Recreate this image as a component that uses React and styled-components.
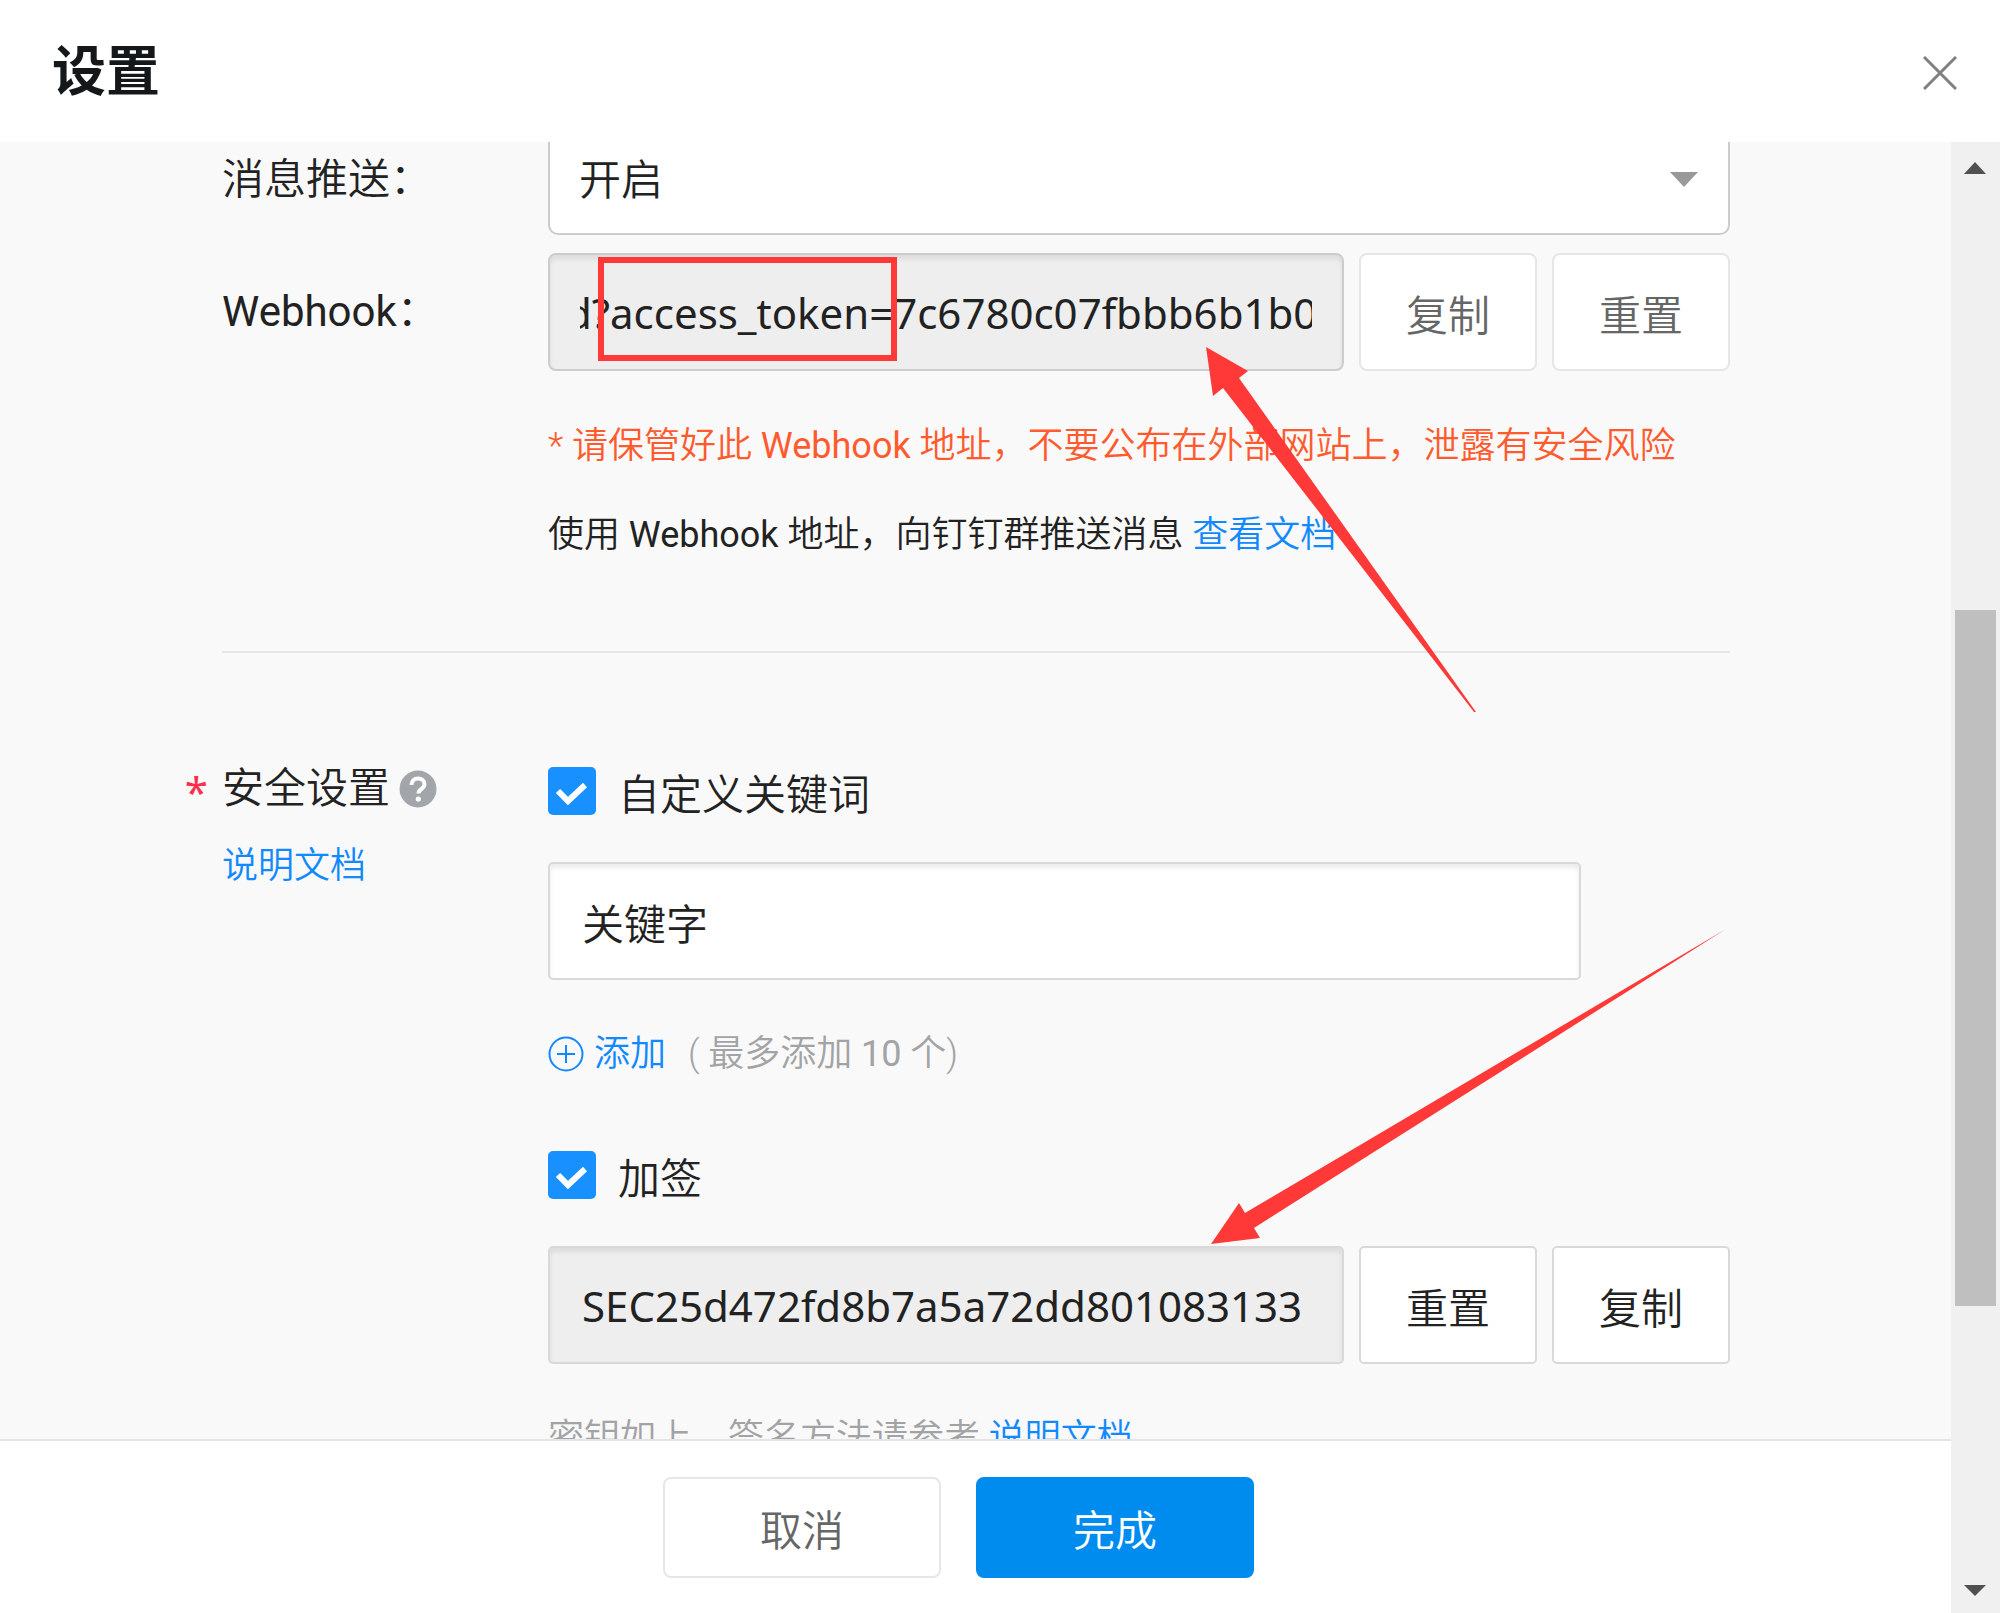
import React, { useEffect, useRef, useState } from 'react';
import styled, { createGlobalStyle } from 'styled-components';

const GlobalStyle = createGlobalStyle`
  * {
    box-sizing: border-box;
  }
  body {
    margin: 0;
    background: #fff;
    color: #222;
    font-family: Roboto, 'Noto Sans CJK SC', sans-serif;
    font-size: 42px;
    font-weight: 350;
  }
  button, input, select {
    font: inherit;
    color: inherit;
  }
`;

const App = () => {
  const tokenInput = useRef(null);
  const [keyword, setKeyword] = useState('关键字');
  const [useKeyword, setUseKeyword] = useState(true);
  const [useSign, setUseSign] = useState(true);

  // keep the token part of the address in view
  useEffect(() => {
    tokenInput.current.scrollLeft = 14;
  }, []);

  return (
    <Dialog lang="zh-CN">
      <GlobalStyle />
      <Header>
        <Title>设置</Title>
        <CloseButton type="button" aria-label="关闭">
          <svg width="34" height="34" viewBox="0 0 34 34" stroke="#808080" strokeWidth="3">
            <path d="M1 1 33 33M33 1 1 33" />
          </svg>
        </CloseButton>
      </Header>
      <Middle>
        <Main>
          <Body>
            <Form>
              <Row>
                <Label htmlFor="push">消息推送：</Label>
                <SelectWrap>
                  <Select id="push" defaultValue="on">
                    <option value="on">开启</option>
                    <option value="off">关闭</option>
                  </Select>
                  <SelectArrow width="28" height="15" viewBox="0 0 28 15">
                    <path d="M0 0h28L14 15z" fill="#999" />
                  </SelectArrow>
                </SelectWrap>
              </Row>
              <Row>
                <Label htmlFor="webhook"><Latin>Webhook</Latin>：</Label>
                <Inline>
                  <TextInput
                    id="webhook"
                    ref={tokenInput}
                    readOnly
                    value="d?access_token=7c6780c07fbbb6b1b0"
                    $border="#ccc"
                  />
                  <SmallButton type="button" $muted>复制</SmallButton>
                  <SmallButton type="button" $muted>重置</SmallButton>
                </Inline>
              </Row>
              <Notes>
                <Text $color="#ff5b2e">
                  * 请保管好此 <Latin>Webhook</Latin> 地址，不要公布在外部网站上，泄露有安全风险
                </Text>
                <Text>
                  使用 <Latin>Webhook</Latin> 地址，向钉钉群推送消息 <Link href="#docs">查看文档</Link>
                </Text>
              </Notes>
              <Divider />
              <Security>
                <SecurityLabel>
                  <Required>*</Required>
                  <SecurityName>
                    安全设置
                    <HelpIcon />
                  </SecurityName>
                  <Text as="div">
                    <Link href="#security">说明文档</Link>
                  </Text>
                </SecurityLabel>
                <Options>
                  <Check checked={useKeyword} onChange={setUseKeyword}>自定义关键词</Check>
                  <KeywordInput
                    aria-label="关键词"
                    value={keyword}
                    onChange={(e) => setKeyword(e.target.value)}
                  />
                  <AddLine>
                    <AddButton type="button">
                      <svg width="36" height="36" viewBox="0 0 36 36" fill="none" stroke="#1389ff" strokeWidth="2">
                        <circle cx="18" cy="18" r="16.5" />
                        <path d="M9 18h18M18 9v18" />
                      </svg>
                      添加
                    </AddButton>
                    <span>( 最多添加 <Latin>10</Latin> 个)</span>
                  </AddLine>
                  <Check checked={useSign} onChange={setUseSign}>加签</Check>
                  <Inline>
                    <TextInput aria-label="加签密钥" readOnly value="SEC25d472fd8b7a5a72dd801083133" />
                    <SmallButton type="button">重置</SmallButton>
                    <SmallButton type="button">复制</SmallButton>
                  </Inline>
                  <Text $color="#a2a3a5">
                    密钥如上，签名方法请参考 <Link href="#sign">说明文档</Link>
                  </Text>
                </Options>
              </Security>
              <Annotations />
            </Form>
          </Body>
          <Footer>
            <FooterButton type="button">取消</FooterButton>
            <FooterButton type="button" $primary>完成</FooterButton>
          </Footer>
        </Main>
        <Scrollbar aria-hidden="true">
          <svg width="49" height="49" viewBox="0 0 49 49">
            <path d="M24 20 35 32H13z" fill="#505050" />
          </svg>
          <Track>
            <Space $size={419} />
            <Thumb $size={696} />
            <Space $size={258} />
          </Track>
          <svg width="49" height="49" viewBox="0 0 49 49">
            <path d="M24 32 35 21H13z" fill="#505050" />
          </svg>
        </Scrollbar>
      </Middle>
    </Dialog>
  );
};

const Check = ({ checked, onChange, children }) => (
  <CheckLabel>
    <CheckBox>
      <CheckInput type="checkbox" checked={checked} onChange={(e) => onChange(e.target.checked)} />
      <CheckMark viewBox="0 0 48 48" fill="none" stroke="#fff" strokeWidth="6">
        <path d="M10 24 20 34 37 18" />
      </CheckMark>
    </CheckBox>
    {children}
  </CheckLabel>
);

const HelpIcon = () => (
  <svg width="38" height="38" viewBox="0 0 38 38" fill="none">
    <circle cx="19" cy="19" r="18.5" fill="#a2a6ab" />
    <path
      d="M12.5 15c0-4 2.800-6.500 6.500-6.500s6.500 2.300 6.500 5.700c0 4.600-6 4.800-6 9.300"
      stroke="#fff"
      strokeWidth="4"
    />
    <circle cx="19.300" cy="29" r="2.600" fill="#fff" />
  </svg>
);

// red frame and arrows drawn over the form
const Annotations = () => (
  <Overlay width="1182" height="1300" viewBox="0 0 1182 1300" aria-hidden="true">
    <rect x="379" y="135" width="293" height="98" fill="none" stroke="#ff3838" strokeWidth="6" />
    <g fill="#ff3838">
      <path d="M984 222 1026 246 1017 253 1254 587 1252 587 1001 263 991 271z" />
      <path d="M989 1119 1017 1078 1023 1088 1504 804 1032 1103 1038 1113z" />
    </g>
  </Overlay>
);

const Dialog = styled.div`
  display: flex;
  flex-direction: column;
  height: 100vh;
  overflow: hidden;
`;

const Header = styled.header`
  display: flex;
  align-items: center;
  justify-content: space-between;
  flex: none;
  height: 142px;
  padding: 4px 43px 0 52px;
`;

const Title = styled.h1`
  margin: 0;
  color: #15181b;
  font-size: 54px;
  font-weight: 700;
  line-height: 80px;
`;

const CloseButton = styled.button`
  display: flex;
  padding: 0;
  border: 0;
  background: none;
  cursor: pointer;
`;

const Middle = styled.div`
  display: flex;
  flex: 1;
  min-height: 0;
`;

const Main = styled.main`
  display: flex;
  flex: 1;
  flex-direction: column;
  min-width: 0;
`;

const Body = styled.div`
  flex: 1;
  min-height: 0;
  overflow: hidden;
  padding: 0 221px 0 222px;
  background: #f9f9f9;
`;

// sits scrolled a little past its top
const Form = styled.form`
  position: relative;
  display: flex;
  flex-direction: column;
  gap: 18px;
  margin-top: -17px;
`;

const Row = styled.div`
  display: grid;
  grid-template-columns: 326px 1fr;
  align-items: center;
`;

const Label = styled.label`
  line-height: 60px;
`;

const Latin = styled.span`
  font-weight: 400;
`;

const SelectWrap = styled.div`
  position: relative;
`;

const Select = styled.select`
  display: block;
  width: 100%;
  height: 110px;
  padding: 0 29px;
  border: 2px solid #ccc;
  border-radius: 10px;
  background: #fff;
  appearance: none;
`;

const SelectArrow = styled.svg`
  position: absolute;
  top: 47px;
  right: 32px;
  pointer-events: none;
`;

const Inline = styled.div`
  display: flex;
  gap: 15px;
`;

const TextInput = styled.input`
  flex: 1;
  min-width: 0;
  height: 118px;
  padding: 0 ${(props) => (props.$border ? 30 : 32)}px;
  border: 2px solid ${(props) => props.$border || '#d9d9d9'};
  border-radius: ${(props) => (props.$border ? 8 : 5)}px;
  outline: 0;
  background: ${(props) => (props.readOnly ? '#eee' : '#fff')};
  box-shadow: inset 0 4px 5px rgba(0, 0, 0, 0.08);
  font-family: 'Noto Sans', 'Noto Sans CJK SC', sans-serif;
  font-weight: 400;
`;

const KeywordInput = styled(TextInput)`
  flex: none;
  width: calc(100% - 149px);
  font-weight: 350;
`;

const SmallButton = styled.button`
  flex: none;
  width: 178px;
  height: 118px;
  padding: 0;
  border: 2px solid ${(props) => (props.$muted ? '#e6e6e6' : '#d9d9d9')};
  border-radius: ${(props) => (props.$muted ? 8 : 5)}px;
  background: #fff;
  color: ${(props) => (props.$muted ? '#666' : '#222')};
  cursor: pointer;
`;

const Notes = styled.div`
  display: flex;
  flex-direction: column;
  gap: 35px;
  margin-top: 30px;
  padding-left: 326px;
`;

const Text = styled.p`
  margin: 0;
  color: ${(props) => props.$color || '#222'};
  font-size: 36px;
  line-height: 54px;
  white-space: nowrap;
`;

const Link = styled.a`
  color: #1389ff;
  text-decoration: none;
`;

const Divider = styled.hr`
  width: 100%;
  height: 2px;
  margin: 71px 0 0;
  border: 0;
  background: #e6e6e6;
`;

const Security = styled.section`
  display: grid;
  grid-template-columns: 326px 1fr;
  margin-top: 96px;
`;

const SecurityLabel = styled.div`
  position: relative;
`;

const Required = styled.span`
  position: absolute;
  right: 100%;
  margin-right: 14px;
  color: #ff2f4b;
  font-family: 'Noto Sans', sans-serif;
  font-weight: 400;
  line-height: 50px;
`;

const SecurityName = styled.div`
  display: flex;
  align-items: center;
  gap: 9px;
  margin-bottom: 28px;
  line-height: 44px;
`;

const Options = styled.div`
  display: flex;
  flex-direction: column;
  gap: 47px;
`;

const CheckLabel = styled.label`
  display: flex;
  align-items: center;
  gap: 22px;
  height: 48px;
  cursor: pointer;
`;

const CheckBox = styled.span`
  position: relative;
  width: 48px;
  height: 48px;
`;

const CheckInput = styled.input`
  display: block;
  width: 48px;
  height: 48px;
  margin: 0;
  border: 2px solid #d9d9d9;
  border-radius: 5px;
  background: #fff;
  appearance: none;

  &:checked {
    border-color: #1890ff;
    background: #1890ff;
  }
`;

const CheckMark = styled.svg`
  position: absolute;
  inset: 0;
  pointer-events: none;
`;

const AddLine = styled.div`
  display: flex;
  align-items: center;
  gap: 22px;
  margin-bottom: 23px;
  color: #a2a3a5;
  font-size: 36px;
  line-height: 54px;
`;

const AddButton = styled.button`
  display: flex;
  align-items: center;
  gap: 10px;
  padding: 0;
  border: 0;
  background: none;
  color: #1389ff;
  cursor: pointer;
`;

const Overlay = styled.svg`
  position: absolute;
  top: 0;
  left: 0;
  overflow: visible;
  pointer-events: none;
`;

const Footer = styled.footer`
  display: flex;
  align-items: center;
  justify-content: center;
  gap: 35px;
  flex: none;
  height: 174px;
  padding-right: 34px;
  border-top: 2px solid #e3e4e5;
  background: #fff;
`;

const FooterButton = styled.button`
  width: 278px;
  height: 101px;
  padding: 0;
  border: 2px solid ${(props) => (props.$primary ? '#008cee' : '#e6e6e6')};
  border-radius: 8px;
  background: ${(props) => (props.$primary ? '#008cee' : '#fff')};
  color: ${(props) => (props.$primary ? '#fff' : '#666')};
  cursor: pointer;
`;

const Scrollbar = styled.div`
  display: flex;
  flex-direction: column;
  flex: none;
  width: 49px;
  background: #f0f0f0;
`;

const Track = styled.div`
  display: flex;
  flex: 1;
  flex-direction: column;
  padding: 0 4px;
`;

const Space = styled.div`
  flex: ${(props) => props.$size};
`;

const Thumb = styled(Space)`
  background: #bfbfbf;
`;

export default App;
